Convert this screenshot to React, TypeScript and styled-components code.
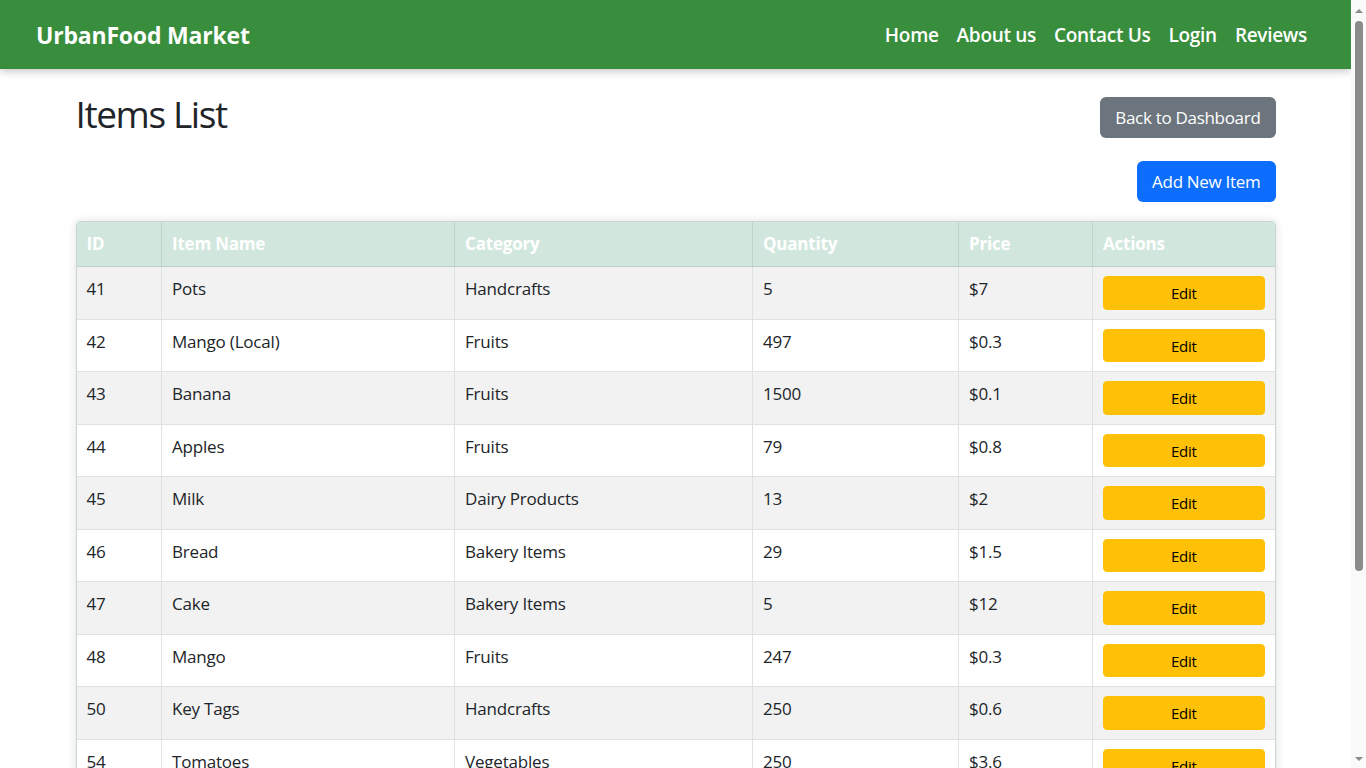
import React from "react";
import styled, { createGlobalStyle } from "styled-components";

const Global = createGlobalStyle`
  html, body { margin: 0; padding: 0; }
  body {
    font-family: "Open Sans", "Noto Sans", sans-serif;
    color: #212529;
    background: #fff;
    margin-right: 15px;
  }
  * { box-sizing: border-box; }
`;

const ScrollTrack = styled.div`
  position: fixed;
  top: 0;
  right: 0;
  width: 15px;
  height: 100vh;
  background: #fafafa;
  display: flex;
  flex-direction: column;
  align-items: center;
  z-index: 10;
`;

const ScrollArrow = styled.div<{ $down?: boolean }>`
  width: 0;
  height: 0;
  margin: ${(p) => (p.$down ? "auto 0 7px" : "9px 0 0")};
  border-left: 4.5px solid transparent;
  border-right: 4.5px solid transparent;
  ${(p) =>
    p.$down ? "border-top: 4.5px solid #8b8b8b;" : "border-bottom: 4.5px solid #8b8b8b;"}
`;

const ScrollThumb = styled.div`
  width: 8px;
  height: 550px;
  margin-top: 8px;
  border-radius: 4px;
  background: #8b8b8b;
`;

const NavBar = styled.nav`
  height: 69px;
  background: #388e3c;
  box-shadow: 0 2px 8px rgba(0, 0, 0, 0.25);
  display: flex;
  align-items: center;
  justify-content: space-between;
  padding: 0 44px 0 36px;
  position: relative;
  z-index: 2;
`;

const Brand = styled.a`
  color: #fff;
  font-size: 23px;
  font-weight: 700;
  text-decoration: none;
  letter-spacing: -0.2px;
`;

const NavLinks = styled.ul`
  display: flex;
  gap: 18px;
  list-style: none;
  margin: 0;
  padding: 0;
`;

const NavLink = styled.a`
  color: #fff;
  font-size: 19px;
  font-weight: 600;
  text-decoration: none;
  letter-spacing: -0.3px;
`;

const Container = styled.main`
  max-width: 1200px;
  margin: 0 auto;
  padding: 21px 0 30px;
`;

const TopRow = styled.div`
  display: flex;
  justify-content: space-between;
  align-items: flex-start;
`;

const Title = styled.h1`
  margin: 0;
  font-size: 37px;
  font-weight: 500;
  line-height: 48px;
  letter-spacing: -1.4px;
`;

const Button = styled.button<{ $variant: "secondary" | "primary" }>`
  font-family: inherit;
  font-size: 17px;
  line-height: 27px;
  padding: 6px 14px;
  border: 1px solid transparent;
  border-radius: 6px;
  color: #fff;
  cursor: pointer;
  letter-spacing: -0.3px;
  background: ${(p) => (p.$variant === "primary" ? "#0d6efd" : "#6c757d")};
`;

const BackButton = styled(Button)`
  margin-top: 7px;
`;

const ActionRow = styled.div`
  display: flex;
  justify-content: flex-end;
  margin-top: 23px;
  margin-bottom: 19px;
`;

const TableWrap = styled.div`
  border: 1px solid #c9d6cf;
  border-radius: 4px;
  box-shadow: 0 0 10px rgba(0, 0, 0, 0.12);
  overflow: hidden;
`;

const Table = styled.table`
  width: 100%;
  border-collapse: collapse;
  font-size: 17px;
  letter-spacing: -0.2px;
`;

const Th = styled.th<{ $w: number }>`
  width: ${(p) => p.$w}px;
  background: #d1e7dd;
  color: #fff;
  font-weight: 700;
  text-align: left;
  padding: 9px 10px;
  line-height: 26px;
  border-left: 1px solid #bfd4ca;
  border-bottom: 1px solid #bcd0c7;
  &:first-child { border-left: none; }
`;

const Tr = styled.tr<{ $odd: boolean }>`
  background: ${(p) => (p.$odd ? "#f2f2f2" : "#fff")};
`;

const Td = styled.td`
  padding: 9px 10px;
  line-height: 25px;
  vertical-align: top;
  border-left: 1px solid #dee2e6;
  border-bottom: 1px solid #dee2e6;
  &:first-child { border-left: none; }
`;

const EditButton = styled.button`
  display: block;
  width: 100%;
  height: 33.5px;
  background: #ffc107;
  border: 1px solid #ffc107;
  border-radius: 4px;
  font-family: inherit;
  font-size: 15px;
  letter-spacing: -0.3px;
  color: #000;
  cursor: pointer;
  padding: 1px 0 0;
`;

const items = [
  { id: 41, name: "Pots", cat: "Handcrafts", qty: 5, price: "$7" },
  { id: 42, name: "Mango (Local)", cat: "Fruits", qty: 497, price: "$0.3" },
  { id: 43, name: "Banana", cat: "Fruits", qty: 1500, price: "$0.1" },
  { id: 44, name: "Apples", cat: "Fruits", qty: 79, price: "$0.8" },
  { id: 45, name: "Milk", cat: "Dairy Products", qty: 13, price: "$2" },
  { id: 46, name: "Bread", cat: "Bakery Items", qty: 29, price: "$1.5" },
  { id: 47, name: "Cake", cat: "Bakery Items", qty: 5, price: "$12" },
  { id: 48, name: "Mango", cat: "Fruits", qty: 247, price: "$0.3" },
  { id: 50, name: "Key Tags", cat: "Handcrafts", qty: 250, price: "$0.6" },
  { id: 54, name: "Tomatoes", cat: "Vegetables", qty: 250, price: "$3.6" },
  { id: 55, name: "Carrots", cat: "Vegetables", qty: 120, price: "$1.2" },
  { id: 56, name: "Cheese", cat: "Dairy Products", qty: 40, price: "$4" },
  { id: 57, name: "Baskets", cat: "Handcrafts", qty: 18, price: "$9" },
];

const cols = [
  { label: "ID", w: 85 },
  { label: "Item Name", w: 293 },
  { label: "Category", w: 298 },
  { label: "Quantity", w: 206 },
  { label: "Price", w: 134 },
  { label: "Actions", w: 182 },
];

export default function App() {
  return (
    <>
      <Global />
      <NavBar>
        <Brand href="#">UrbanFood Market</Brand>
        <NavLinks>
          {["Home", "About us", "Contact Us", "Login", "Reviews"].map((l) => (
            <li key={l}>
              <NavLink href="#">{l}</NavLink>
            </li>
          ))}
        </NavLinks>
      </NavBar>
      <Container>
        <TopRow>
          <Title>Items List</Title>
          <BackButton $variant="secondary">Back to Dashboard</BackButton>
        </TopRow>
        <ActionRow>
          <Button $variant="primary">Add New Item</Button>
        </ActionRow>
        <TableWrap>
          <Table>
            <thead>
              <tr>
                {cols.map((c) => (
                  <Th key={c.label} $w={c.w}>
                    {c.label}
                  </Th>
                ))}
              </tr>
            </thead>
            <tbody>
              {items.map((it, i) => (
                <Tr key={it.id} $odd={i % 2 === 0}>
                  <Td>{it.id}</Td>
                  <Td>{it.name}</Td>
                  <Td>{it.cat}</Td>
                  <Td>{it.qty}</Td>
                  <Td>{it.price}</Td>
                  <Td>
                    <EditButton>Edit</EditButton>
                  </Td>
                </Tr>
              ))}
            </tbody>
          </Table>
        </TableWrap>
      </Container>
      <ScrollTrack aria-hidden>
        <ScrollArrow />
        <ScrollThumb />
        <ScrollArrow $down />
      </ScrollTrack>
    </>
  );
}
